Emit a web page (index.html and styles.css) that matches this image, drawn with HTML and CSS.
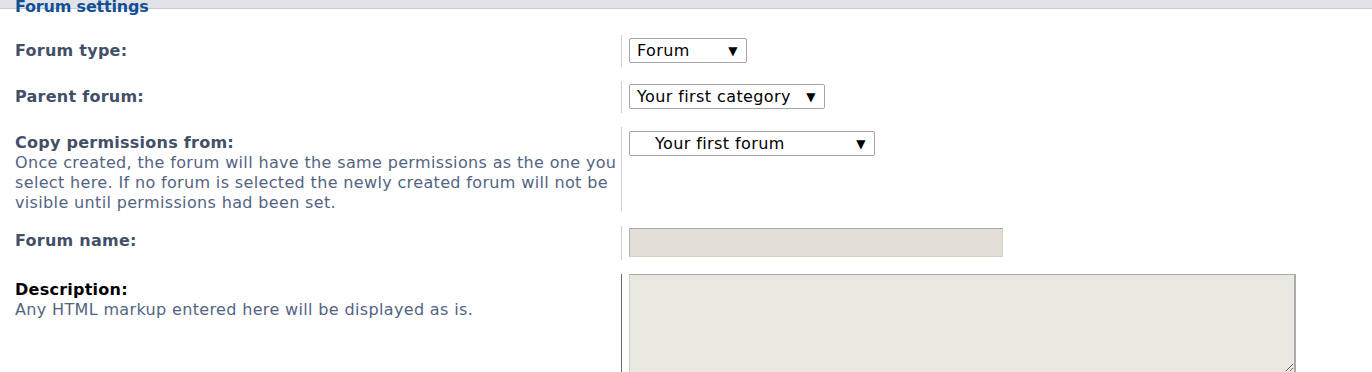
FILE: index.html
```html
<!DOCTYPE html>
<html lang="en">
<head>
    <meta charset="UTF-8">
    <title>Forum settings</title>
    <link rel="stylesheet" href="styles.css">
</head>
<body>
    <!-- Top bar with fieldset legend -->
    <div class="topbar">
        <span class="legend">Forum settings</span>
    </div>

    <div class="settings">
        <dl class="row row-type">
            <dt><label>Forum type:</label></dt>
            <dd>
                <div class="select sel-type"><span>Forum</span><i>&#9660;</i></div>
            </dd>
        </dl>

        <dl class="row row-parent">
            <dt><label>Parent forum:</label></dt>
            <dd>
                <div class="select sel-parent"><span>Your first category</span><i>&#9660;</i></div>
            </dd>
        </dl>

        <dl class="row row-copy">
            <dt>
                <label>Copy permissions from:</label>
                <span class="explain">Once created, the forum will have the same permissions as the one you select here. If no forum is selected the newly created forum will not be visible until permissions had been set.</span>
            </dt>
            <dd>
                <div class="select sel-copy"><span class="indent">Your first forum</span><i>&#9660;</i></div>
            </dd>
        </dl>

        <dl class="row row-name">
            <dt><label>Forum name:</label></dt>
            <dd><input type="text" class="inputbox"></dd>
        </dl>

        <dl class="row row-desc">
            <dt>
                <label class="dark">Description:</label>
                <span class="explain">Any HTML markup entered here will be displayed as is.</span>
            </dt>
            <dd><textarea class="textbox"></textarea></dd>
        </dl>
    </div>
</body>
</html>
```

FILE: styles.css
```css
* {
    margin: 0;
    padding: 0;
    box-sizing: border-box;
}
body {
    font-family: Verdana, "DejaVu Sans", sans-serif;
    font-size: 16px;
    letter-spacing: 0.35px;
    background-color: #fff;
    color: #536482;
    overflow: hidden;
}

/* Top bar */
.topbar {
    height: 9px;
    background-color: #e2e3e7;
    border-bottom: 1px solid #c9c9cc;
    position: relative;
}
.legend {
    position: absolute;
    left: 15px;
    top: -2px;
    font-size: 16px;
    font-weight: bold;
    letter-spacing: -0.2px;
    color: #115098;
    line-height: 18px;
}

/* Rows */
.settings {
    padding-top: 26px;
}
.row {
    display: flex;
    margin-bottom: 14px;
}
.row dt {
    width: 622px;
    padding-left: 15px;
    padding-right: 4px;
    border-right: 1px solid #cfcfcf;
}
.row dd {
    padding-left: 7px;
}
.row label {
    display: block;
    font-weight: bold;
    letter-spacing: 0.25px;
    color: #425067;
    line-height: 20px;
}
.row label.dark {
    color: #000;
}
.explain {
    display: block;
    line-height: 20px;
}

.row-type dt, .row-parent dt { height: 32px; padding-top: 6px; }
.row-type dd, .row-parent dd { padding-top: 3px; }
.row-copy { margin-bottom: 15px; }
.row-copy dt { height: 84px; padding-top: 6px; }
.row-copy dd { padding-top: 4px; }
.row-name dt { height: 34px; padding-top: 5px; }
.row-name dd { padding-top: 2px; }
.row-desc dt { height: 110px; padding-top: 6px; border-right-color: #6b6b6b; }
.row-desc dd { padding-top: 0; }

/* Selects */
.select {
    display: flex;
    align-items: center;
    justify-content: space-between;
    height: 25px;
    border: 1px solid #a5a5a5;
    border-radius: 2px;
    padding: 0 8px 0 7px;
    font-size: 16px;
    letter-spacing: 0.4px;
    color: #000;
    background: #fff;
}
.select i {
    font-style: normal;
    font-size: 12px;
}
.select .indent {
    padding-left: 18px;
}
.sel-type { width: 118px; }
.sel-parent { width: 196px; }
.sel-copy { width: 246px; }

/* Inputs */
.inputbox {
    width: 374px;
    height: 29px;
    background: #e3dfd8;
    border: 1px solid #d3d0c0;
    border-top-color: #a9a9a9;
    border-left-color: #b7b5aa;
}
.textbox {
    display: block;
    width: 667px;
    height: 99px;
    background: #e8e7e0;
    border: 1px solid #d0cfc4;
    border-top-color: #aaa;
    border-right: 2px solid #aaa;
}
```
